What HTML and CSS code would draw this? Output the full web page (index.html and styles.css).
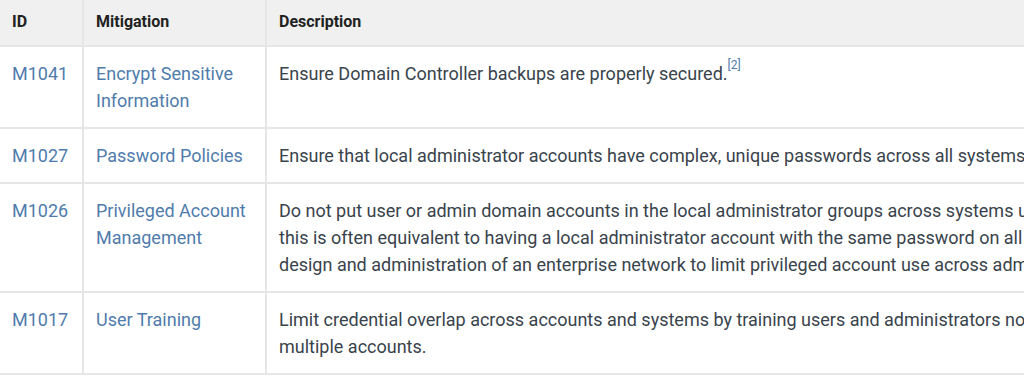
FILE: index.html
```html
<!DOCTYPE html>
<html lang="en">
<head>
    <meta charset="UTF-8">
    <meta name="viewport" content="width=device-width, initial-scale=1.0">
    <title>Mitigations</title>
    <link rel="stylesheet" href="styles.css">
</head>
<body>
    <div class="wrap">
        <table class="mitigations">
            <colgroup>
                <col class="col-id">
                <col class="col-name">
                <col class="col-desc">
            </colgroup>
            <thead>
                <tr>
                    <th>ID</th>
                    <th>Mitigation</th>
                    <th>Description</th>
                </tr>
            </thead>
            <tbody>
                <tr>
                    <td><a href="#">M1041</a></td>
                    <td><a href="#">Encrypt Sensitive Information</a></td>
                    <td>Ensure Domain Controller backups are properly secured.<sup><a href="#">[2]</a></sup></td>
                </tr>
                <tr>
                    <td><a href="#">M1027</a></td>
                    <td><a href="#">Password Policies</a></td>
                    <td>Ensure that local administrator accounts have complex, unique passwords across all systems on the network.</td>
                </tr>
                <tr>
                    <td><a href="#">M1026</a></td>
                    <td><a href="#">Privileged Account Management</a></td>
                    <td>Do not put user or admin domain accounts in the local administrator groups across systems unless they are tightly controlled, as this is often equivalent to having a local administrator account with the same password on all systems. Follow best practices for design and administration of an enterprise network to limit privileged account use across administrative tiers.</td>
                </tr>
                <tr>
                    <td><a href="#">M1017</a></td>
                    <td><a href="#">User Training</a></td>
                    <td>Limit credential overlap across accounts and systems by training users and administrators not to use the same password for multiple accounts.</td>
                </tr>
            </tbody>
        </table>
    </div>
</body>
</html>
```

FILE: styles.css
```css
*{
    margin: 0;
    padding: 0;
    box-sizing: border-box;
}
body{
    background-color: #ffffff;
    font-family: Roboto, "Liberation Sans", sans-serif;
    color: #39434c;
    overflow: hidden;
}
.wrap{
    width: 1024px;
    overflow: hidden;
}
.mitigations{
    width: 1330px;
    table-layout: fixed;
    border-collapse: collapse;
    font-size: 18px;
    line-height: 27px;
}
.col-id{
    width: 83px;
}
.col-name{
    width: 183px;
}
.mitigations th,
.mitigations td{
    text-align: left;
    vertical-align: top;
    padding: 13px 12px;
    border: 2px solid #e6e6e6;
}
.mitigations th{
    background-color: #f0f0f0;
    font-size: 16px;
    font-weight: 700;
    color: #222222;
    padding: 8px 12px 10px 12px;
    border-top: none;
}
.mitigations tr > :first-child{
    border-left: none;
}
.mitigations tr > :last-child{
    border-right: none;
}
.mitigations a{
    color: #4f7cac;
    text-decoration: none;
}
.mitigations sup{
    font-size: 12px;
    line-height: 0;
    position: relative;
    top: -4px;
}
```
